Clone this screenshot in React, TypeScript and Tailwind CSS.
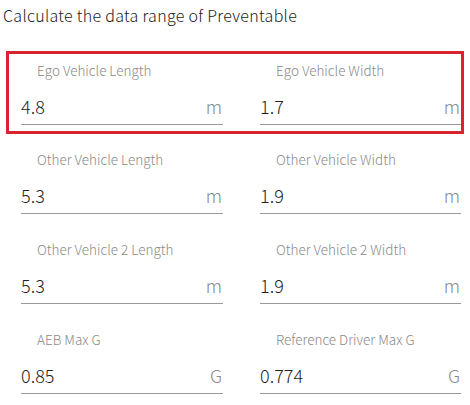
type FieldProps = { label: string; value: string; unit: string };

function Field({ label, value, unit }: FieldProps) {
  return (
    <div className="flex flex-col">
      <div className="pl-[16px] text-[13.5px] leading-[16px] text-[#8a8a8a] whitespace-nowrap">{label}</div>
      <div className="mt-[16px] flex items-baseline justify-between border-b border-[#9a9a9a] pb-[6px]">
        <span className="text-[18px] leading-[24px] text-[#1f1f1f]">{value}</span>
        <span className="text-[18px] leading-[24px] text-[#8a8a8a] pr-[1px]">{unit}</span>
      </div>
    </div>
  );
}

function Row({ left, right }: { left: FieldProps; right: FieldProps }) {
  return (
    <div className="grid grid-cols-[202px_201px] gap-x-[37px]">
      <Field {...left} />
      <Field {...right} />
    </div>
  );
}

export default function App() {
  return (
    <div
      className="w-[470px] h-[405px] bg-white overflow-hidden font-light"
      style={{ fontFamily: '"Noto Sans CJK JP", "Noto Sans", sans-serif' }}
    >
      <div className="pt-[3px] pl-[3px] text-[16px] leading-[24px] tracking-[0.3px] text-[#222222]">
        Calculate the data range of Preventable
      </div>
      <div className="mt-[24px] ml-[6px] w-[458px] border-[3px] border-[#d9232e] pt-[8px] pb-[6px] pl-[12px]">
        <Row
          left={{ label: 'Ego Vehicle Length', value: '4.8', unit: 'm' }}
          right={{ label: 'Ego Vehicle Width', value: '1.7', unit: 'm' }}
        />
      </div>
      <div className="pl-[21px] pt-[17px] flex flex-col gap-[27px]">
        <Row
          left={{ label: 'Other Vehicle Length', value: '5.3', unit: 'm' }}
          right={{ label: 'Other Vehicle Width', value: '1.9', unit: 'm' }}
        />
        <Row
          left={{ label: 'Other Vehicle 2 Length', value: '5.3', unit: 'm' }}
          right={{ label: 'Other Vehicle 2 Width', value: '1.9', unit: 'm' }}
        />
        <Row
          left={{ label: 'AEB Max G', value: '0.85', unit: 'G' }}
          right={{ label: 'Reference Driver Max G', value: '0.774', unit: 'G' }}
        />
      </div>
    </div>
  );
}
